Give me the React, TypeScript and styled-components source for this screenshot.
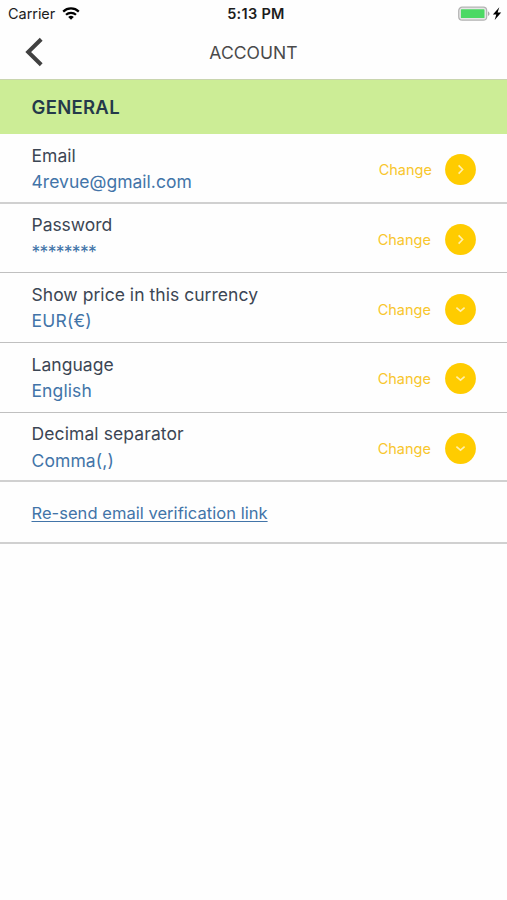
import React from "react";
import styled, { createGlobalStyle } from "styled-components";

const GlobalStyle = createGlobalStyle`
  * { box-sizing: border-box; }
  body { margin: 0; background: #fefefe; font-family: Inter, "Liberation Sans", sans-serif; }
`;

const Screen = styled.main`
  width: 507px;
  height: 900px;
  overflow: hidden;
  background: #fefefe;
`;

const StatusBar = styled.div`
  display: grid;
  grid-template-columns: 1fr auto 1fr;
  align-items: center;
  height: 27px;
  padding: 0 5px 0 8px;
  color: #1c1c1c;
`;

const Carrier = styled.div`
  display: flex;
  align-items: center;
  gap: 7px;
  font-size: 14.5px;
  letter-spacing: -0.05px;
`;

const Clock = styled.div`
  font-size: 14.5px;
  font-weight: 600;
  letter-spacing: 0.3px;
  padding-left: 2px;
`;

const Power = styled.div`
  display: flex;
  justify-content: flex-end;
`;

const NavBar = styled.header`
  display: grid;
  grid-template-columns: 60px 1fr 60px;
  align-items: center;
  height: 52px;
`;

const BackButton = styled.button`
  display: flex;
  margin: 0;
  padding: 0 0 2px 24px;
  border: 0;
  background: none;
`;

const Title = styled.h1`
  margin: 0;
  padding-bottom: 1px;
  text-align: center;
  font-size: 17.5px;
  font-weight: 400;
  letter-spacing: 0.05px;
  color: #4a4a4a;
`;

const SectionHeader = styled.h2`
  display: flex;
  align-items: center;
  height: 55px;
  margin: 0;
  padding-left: 31.5px;
  border-top: 1px solid #c9d5ae;
  background: #cced96;
  color: #24394a;
  font-size: 18.5px;
  font-weight: 600;
  letter-spacing: 0.3px;
`;

const Row = styled.section<{ $rule: number }>`
  display: flex;
  justify-content: space-between;
  height: 69.7px;
  padding: 8.7px 31px 0 31.5px;
  border-bottom: ${(p) => p.$rule}px solid ${(p) => (p.$rule > 1 ? "#d0d0d0" : "#c0c0c0")};
`;

const Label = styled.div<{ $spacing: number }>`
  font-size: 17.5px;
  line-height: 26.4px;
  letter-spacing: ${(p) => p.$spacing}px;
  color: #3c4654;
`;

const Value = styled(Label)`
  color: #4274a8;
`;

const ChangeButton = styled.button<{ $gap: number }>`
  display: flex;
  align-items: center;
  gap: ${(p) => p.$gap}px;
  height: 54px;
  margin: 0;
  padding: 0;
  border: 0;
  background: none;
  color: #f8c62c;
  font-family: inherit;
  font-size: 14.5px;
  letter-spacing: 0.02px;
`;

const LinkRow = styled.div`
  display: flex;
  align-items: center;
  height: 61.5px;
  padding: 2px 0 0 31.5px;
  border-bottom: 2px solid #d0d0d0;
`;

const ResendLink = styled.a`
  color: #4274a8;
  font-size: 16.5px;
  letter-spacing: 0.04px;
  text-decoration: underline;
  text-decoration-thickness: 1px;
  text-underline-offset: 2px;
`;

const Wifi = () => (
  <svg width="18" height="14" viewBox="0 0 18 14" fill="none" stroke="#000" strokeWidth="2.2">
    <path d="M1.2 4.6a11.2 11.2 0 0 1 15.6 0" />
    <path d="M4 7.8a7.2 7.2 0 0 1 10 0" />
    <path d="M9 12.7 6.2 10a4 4 0 0 1 5.6 0Z" fill="#000" stroke="none" />
  </svg>
);

const Battery = () => (
  <svg width="44" height="16" viewBox="0 0 44 16">
    <rect x="0.7" y="1.2" width="28" height="13" rx="3.5" fill="#e6e6e6" stroke="#b3b3b3" strokeWidth="1.2" />
    <rect x="2.9" y="3.3" width="23.6" height="8.8" rx="0.6" fill="#4cd964" />
    <path d="M30 5.5c2 .7 2 3.7 0 4.4Z" fill="#a8a8a8" />
    <path d="m41.3 1.3-6.4 7.3h3.4l-1.6 5.3 6.5-7.3h-3.6Z" fill="#000" />
  </svg>
);

const BackArrow = () => (
  <svg width="20" height="30" viewBox="0 0 20 30" fill="none">
    <path d="M17.2 2.2 4.2 15l13 12.8" stroke="#414141" strokeWidth="4" />
  </svg>
);

const CircleArrow = ({ down }: { down?: boolean }) => (
  <svg width="31" height="31" viewBox="0 0 31 31" fill="none">
    <circle cx="15.5" cy="15.5" r="15.4" fill="#fc0" />
    <path
      d={down ? "m11.4 13.6 4.1 3.6 4.1-3.6" : "m13.6 11.4 4 4.1-4 4.1"}
      stroke="#fff0ae"
      strokeWidth="1.6"
    />
  </svg>
);

const settings = [
  { label: "Email", value: "4revue@gmail.com", down: false, gap: 13, ls: 0.05, vs: 0.02, rule: 2 },
  { label: "Password", value: "********", down: false, gap: 14, ls: -0.05, vs: -0.7, rule: 1 },
  { label: "Show price in this currency", value: "EUR(€)", down: true, gap: 14, ls: 0.04, vs: 0.2, rule: 1 },
  { label: "Language", value: "English", down: true, gap: 14, ls: 0.04, vs: 0.1, rule: 1 },
  { label: "Decimal separator", value: "Comma(,)", down: true, gap: 14, ls: 0.1, vs: 0.1, rule: 2 },
];

export default function App() {
  return (
    <Screen>
      <GlobalStyle />
      <StatusBar>
        <Carrier>
          Carrier
          <Wifi />
        </Carrier>
        <Clock>5:13 PM</Clock>
        <Power>
          <Battery />
        </Power>
      </StatusBar>
      <NavBar>
        <BackButton aria-label="Back">
          <BackArrow />
        </BackButton>
        <Title>ACCOUNT</Title>
      </NavBar>
      <SectionHeader>GENERAL</SectionHeader>
      {settings.map((s) => (
        <Row key={s.label} $rule={s.rule}>
          <div>
            <Label $spacing={s.ls}>{s.label}</Label>
            <Value $spacing={s.vs}>{s.value}</Value>
          </div>
          <ChangeButton $gap={s.gap}>
            Change
            <CircleArrow down={s.down} />
          </ChangeButton>
        </Row>
      ))}
      <LinkRow>
        <ResendLink>Re-send email verification link</ResendLink>
      </LinkRow>
    </Screen>
  );
}
